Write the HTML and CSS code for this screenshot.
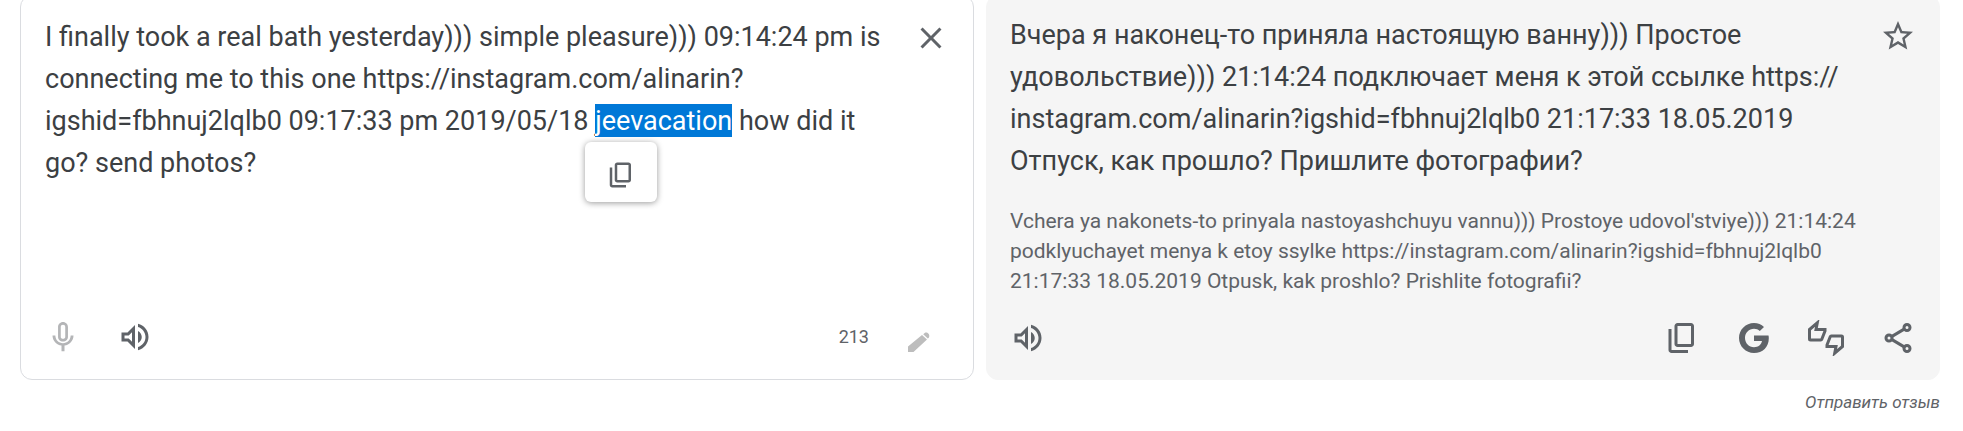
FILE: index.html
```html
<!DOCTYPE html>
<html lang="ru">
<head>
<meta charset="utf-8">
<title>Переводчик</title>
<link rel="stylesheet" href="styles.css">
</head>
<body>
<main class="translator">
  <div class="panels">
    <section class="panel panel-source">
      <div class="panel-body">
        <div class="source-field">
          <span class="highlight" aria-hidden="true"></span>
          <textarea class="source-text" id="source" rows="5" aria-label="Исходный текст" spellcheck="false">I finally took a real bath yesterday))) simple pleasure))) 09:14:24 pm is connecting me to this one https://instagram.com/alinarin?igshid=fbhnuj2lqlb0 09:17:33 pm 2019/05/18 jeevacation how did it go? send photos?</textarea>
          <button class="copy-popup" type="button" aria-label="Копировать выделенное">
            <svg class="icon-small" viewBox="0 0 24 24"><path d="M9 18q-.825 0-1.412-.587T7 16V4q0-.825.588-1.413T9 2h9q.825 0 1.413.588T20 4v12q0 .825-.587 1.413T18 18zm0-2h9V4H9zm-4 6q-.825 0-1.412-.587T3 20V6h2v14h11v2z"/></svg>
          </button>
        </div>
        <button class="icon-button corner-button" type="button" aria-label="Очистить">
          <svg class="icon" viewBox="0 0 24 24"><path d="M19 6.41 17.59 5 12 10.59 6.41 5 5 6.41 10.59 12 5 17.59 6.41 19 12 13.41 17.59 19 19 17.59 13.41 12z"/></svg>
        </button>
      </div>
      <div class="toolbar">
        <button class="icon-button muted" type="button" aria-label="Голосовой ввод">
          <svg class="icon" viewBox="0 0 24 24"><path fill-rule="evenodd" d="M12 15c1.930 0 3.300-1.340 3.300-3V5.300c0-1.660-1.370-3.300-3.300-3.300S8.700 3.640 8.700 5.300V12c0 1.660 1.370 3 3.300 3zm-1.500-9.700c0-.900.600-1.500 1.500-1.500s1.500.600 1.500 1.500V12c0 .700-.600 1.200-1.500 1.200s-1.500-.500-1.500-1.200zM17.100 11c0 3-2.340 5.100-5.100 5.100S6.900 14 6.900 11H5c0 3.410 2.720 6.230 6 6.720V21.500h2v-3.780c3.280-.480 6-3.300 6-6.720z"/></svg>
        </button>
        <button class="icon-button" type="button" aria-label="Прослушать">
          <svg class="icon" viewBox="0 0 24 24"><path d="M3 9v6h4l5 5V4L7 9H3zm7-.17v6.340L7.830 13H5v-2h2.830L10 8.830zM16.500 12c0-1.770-1.020-3.290-2.500-4.030v8.050c1.480-.730 2.500-2.250 2.500-4.020zM14 3.230v2.060c2.890.860 5 3.540 5 6.710s-2.110 5.850-5 6.710v2.060c4.010-.910 7-4.490 7-8.770s-2.990-7.860-7-8.770z"/></svg>
        </button>
        <span class="counter">213</span>
        <button class="icon-button faint" type="button" aria-label="Рукописный ввод">
          <svg class="icon" viewBox="0 0 36 36"><path d="M3 33v-5.500L17 16l5 4.500L8.500 33zM18.200 15.200l1.500-1.200c1.800-1.300 5.300.500 4.500 3.800-.100.500-.400.800-.700 1.100l-.700.700z"/></svg>
        </button>
      </div>
    </section>
    <section class="panel panel-result">
      <div class="panel-body">
        <div class="result">
          <p class="result-text">Вчера я наконец-то приняла настоящую ванну))) Простое удовольствие))) 21:14:24 подключает меня к этой ссылке https://<wbr>instagram.com/alinarin?igshid=fbhnuj2lqlb0 21:17:33 18.05.2019 Отпуск, как прошло? Пришлите фотографии?</p>
          <p class="translit">Vchera ya nakonets-to prinyala nastoyashchuyu vannu))) Prostoye udovol'stviye))) 21:14:24 podklyuchayet menya k etoy ssylke https://instagram.com/alinarin?igshid=fbhnuj2lqlb0 21:17:33 18.05.2019 Otpusk, kak proshlo? Prishlite fotografii?</p>
        </div>
        <button class="icon-button corner-button" type="button" aria-label="Сохранить перевод">
          <svg class="icon" viewBox="0 0 24 24"><path d="M22 9.240l-7.190-.620L12 2 9.190 8.630 2 9.240l5.460 4.730L5.820 21 12 17.270 18.180 21l-1.630-7.030L22 9.240zM12 15.400l-3.760 2.270 1-4.280-3.320-2.880 4.380-.380L12 6.100l1.710 4.040 4.380.380-3.320 2.880 1 4.280L12 15.400z"/></svg>
        </button>
      </div>
      <div class="toolbar">
        <button class="icon-button" type="button" aria-label="Прослушать перевод">
          <svg class="icon" viewBox="0 0 24 24"><path d="M3 9v6h4l5 5V4L7 9H3zm7-.17v6.340L7.830 13H5v-2h2.830L10 8.830zM16.500 12c0-1.770-1.020-3.290-2.500-4.030v8.050c1.480-.730 2.500-2.250 2.500-4.020zM14 3.230v2.060c2.890.860 5 3.540 5 6.710s-2.110 5.850-5 6.710v2.060c4.010-.910 7-4.490 7-8.770s-2.990-7.860-7-8.770z"/></svg>
        </button>
        <span class="spacer"></span>
        <button class="icon-button" type="button" aria-label="Копировать перевод">
          <svg class="icon" viewBox="0 0 24 24"><path d="M9 18q-.825 0-1.412-.587T7 16V4q0-.825.588-1.413T9 2h9q.825 0 1.413.588T20 4v12q0 .825-.587 1.413T18 18zm0-2h9V4H9zm-4 6q-.825 0-1.412-.587T3 20V6h2v14h11v2z"/></svg>
        </button>
        <button class="icon-button" type="button" aria-label="Искать в Google">
          <svg class="icon" viewBox="0 0 36 36"><path d="M18 15.500h14.500c.200.900.300 1.700.300 2.700C32.800 27 26.800 33 18 33 9.700 33 3 26.300 3 18S9.700 3 18 3c4 0 7.400 1.500 10 3.900L23.800 11c-1.600-1.400-3.500-2.200-5.800-2.200-5 0-9 4.100-9 9.200s4 9.200 9 9.200c4.500 0 7.300-2.500 8-6.200h-8z"/></svg>
        </button>
        <button class="icon-button" type="button" aria-label="Оценить перевод">
          <svg class="icon" viewBox="0 0 36 36"><path class="stroke-wide" d="M1.500 9.500v9.500c0 .600.400 1 1 1h10.300c.500 0 .800-.200 1-.700l3.200-8.300V9.500H8L9.300 2.800zM34.500 26.500V17c0-.600-.400-1-1-1H23.200c-.500 0-.800.200-1 .700L19 25v1.500h9l-1.300 6.700z"/></svg>
        </button>
        <button class="icon-button" type="button" aria-label="Поделиться">
          <svg class="icon" viewBox="0 0 24 24"><path class="stroke" d="m8 10.900 8.100-4.800M8 13.100l8.100 4.800"/><circle class="stroke" cx="18" cy="5" r="2"/><circle class="stroke" cx="6" cy="12" r="2"/><circle class="stroke" cx="18" cy="19" r="2"/></svg>
        </button>
      </div>
    </section>
  </div>
  <footer class="footer"><a class="feedback" href="#feedback">Отправить отзыв</a></footer>
</main>
<script src="script.js"></script>
</body>
</html>
```
FILE: styles.css
```css
* {
  box-sizing: border-box;
}

body {
  margin: 0;
  background: #fff;
  color: #3c4043;
  font-family: Roboto, "Noto Sans", sans-serif;
}

.translator {
  margin: -5px 23px 0 20px;
}

.panels {
  display: grid;
  grid-template-columns: 1fr 1fr;
  gap: 12px;
}

.panel {
  display: flex;
  flex-direction: column;
  justify-content: space-between;
  gap: 24px;
  border: 1px solid #dadce0;
  border-radius: 12px;
}

.panel-source {
  padding: 20px 24px 24px;
}

.panel-result {
  padding: 18px 23px 23px;
  background: #f5f5f5;
  border-color: #f5f5f5;
}

.panel-body {
  display: flex;
  align-items: flex-start;
  gap: 12px;
}

.source-field {
  position: relative;
  flex: 1;
  display: flex;
}

.source-text {
  position: relative;
  flex: 1;
  min-width: 0;
  padding: 0;
  border: 0;
  outline: 0;
  resize: none;
  overflow: hidden;
  background: transparent;
  color: inherit;
  font-family: inherit;
  font-size: 27px;
  line-height: 42px;
}

.source-text::selection {
  background: transparent;
  color: #fff;
}

.highlight {
  position: absolute;
  left: 550px;
  top: 88px;
  width: 137px;
  height: 33px;
  background: #0078d7;
}

.copy-popup {
  position: absolute;
  left: 540px;
  top: 126px;
  padding: 18px 21px 12px;
  border: 0;
  border-radius: 6px;
  background: #fff;
  box-shadow: 0 1px 6px rgba(0, 0, 0, 0.4);
}

.icon,
.icon-small {
  display: block;
  width: 36px;
  height: 36px;
  fill: #5f6368;
}

.icon-small {
  width: 30px;
  height: 30px;
}

.stroke,
.stroke-wide {
  fill: none;
  stroke: #5f6368;
  stroke-width: 2;
}

.stroke-wide {
  stroke-width: 3;
}

.icon-button {
  padding: 0;
  border: 0;
  background: none;
}

.corner-button {
  margin-top: 4px;
}

.muted .icon {
  fill: #b4b5b7;
}

.faint .icon {
  fill: #bdbdbd;
}

.result {
  flex: 1;
}

.result-text {
  margin: 0 0 24px;
  font-size: 27px;
  line-height: 42px;
}

.translit {
  margin: 0;
  color: #5f6368;
  font-size: 21px;
  line-height: 30px;
}

.toolbar {
  display: flex;
  align-items: center;
  gap: 36px;
}

.panel-source .toolbar {
  padding-right: 8px;
}

.counter {
  margin-left: auto;
  color: #5f6368;
  font-size: 18px;
  line-height: 24px;
}

.spacer {
  flex: 1;
}

.footer {
  display: flex;
  justify-content: flex-end;
  padding-top: 10px;
}

.feedback {
  color: #5f6368;
  font-size: 17px;
  font-style: italic;
  line-height: 24px;
  text-decoration: none;
}
```
FILE: script.js
```js
const source = document.getElementById("source");
const word = "jeevacation";
const start = source.value.indexOf(word);

source.focus();
source.setSelectionRange(start, start + word.length);
```
